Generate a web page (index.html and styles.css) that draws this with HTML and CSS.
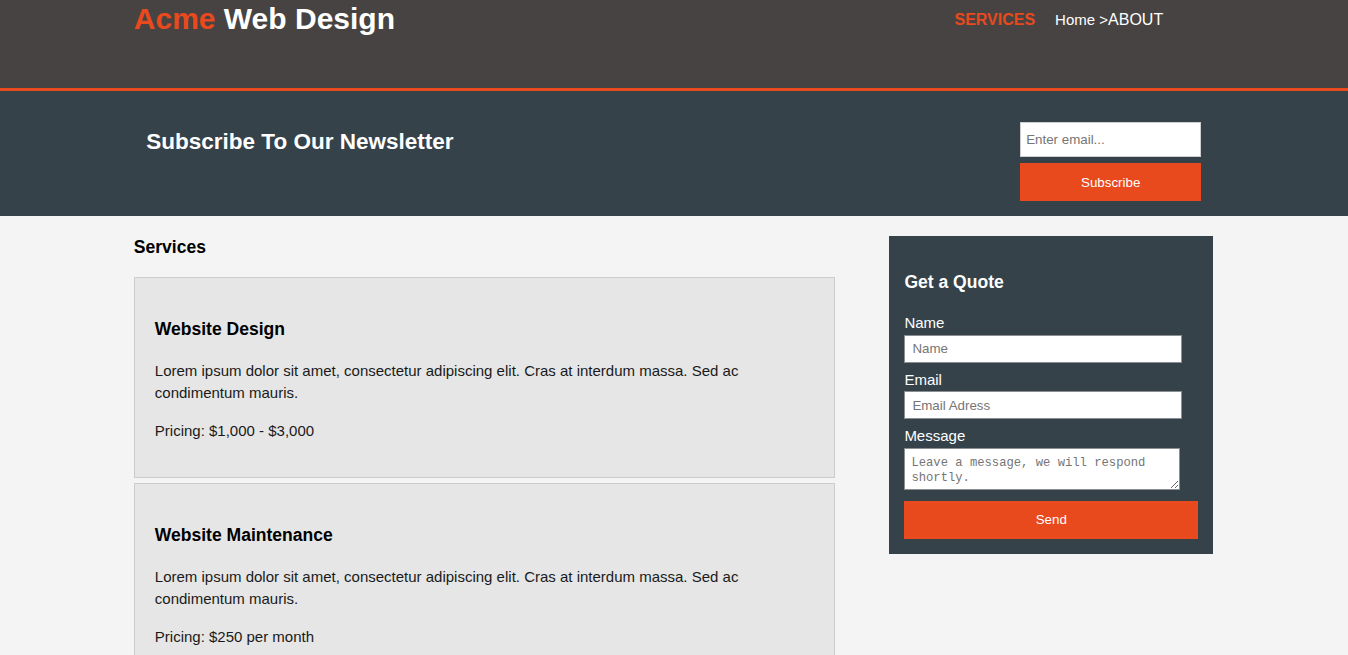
FILE: index.html
```html
<!DOCTYPE html>
<html lang="en">
<head>
<meta charset="utf-8">
<title>Acme Web Design | Services</title>
<link rel="stylesheet" href="styles.css">
</head>
<body>
<header class="site-header">
  <div class="container header-inner">
    <div class="branding">
      <h1><span class="highlight">Acme</span> Web Design</h1>
    </div>
    <nav class="main-nav">
      <a class="nav-link current" href="#">Services</a>
      <span class="nav-crumb">Home &gt;</span><a class="nav-link" href="#">About</a>
    </nav>
  </div>
</header>

<section class="newsletter">
  <div class="news-inner">
    <h2 class="news-title">Subscribe To Our Newsletter</h2>
    <form class="news-form">
      <input class="news-input" type="email" placeholder="Enter email...">
      <button class="btn news-btn" type="button">Subscribe</button>
    </form>
  </div>
</section>

<section class="main">
  <div class="container main-inner">
    <article class="services">
      <h3 class="page-title">Services</h3>
      <div class="service-card">
        <h3>Website Design</h3>
        <p>Lorem ipsum dolor sit amet, consectetur adipiscing elit. Cras at interdum massa. Sed ac condimentum mauris.</p>
        <p>Pricing: $1,000 - $3,000</p>
      </div>
      <div class="service-card">
        <h3>Website Maintenance</h3>
        <p>Lorem ipsum dolor sit amet, consectetur adipiscing elit. Cras at interdum massa. Sed ac condimentum mauris.</p>
        <p>Pricing: $250 per month</p>
      </div>
      <div class="service-card">
        <h3>Website Hosting</h3>
        <p>Lorem ipsum dolor sit amet, consectetur adipiscing elit. Cras at interdum massa. Sed ac condimentum mauris.</p>
        <p>Pricing: $25 per month</p>
      </div>
    </article>

    <aside class="sidebar">
      <h3 class="side-title">Get a Quote</h3>
      <form class="quote">
        <div class="field">
          <label class="field-label">Name</label>
          <input class="field-input" type="text" placeholder="Name">
        </div>
        <div class="field">
          <label class="field-label">Email</label>
          <input class="field-input" type="email" placeholder="Email Adress">
        </div>
        <div class="field">
          <label class="field-label">Message</label>
          <textarea class="field-text" placeholder="Leave a message, we will respond shortly."></textarea>
        </div>
        <button class="btn send-btn" type="button">Send</button>
      </form>
    </aside>
  </div>
</section>
</body>
</html>
```

FILE: styles.css
```css
body {
  margin: 0;
  padding: 0;
  font: 15px/1.5 "Liberation Sans", Arial, Helvetica, sans-serif;
  background-color: #f4f4f4;
  color: #111;
}

.container {
  width: calc(80% + 1px);
  margin-left: calc(10% - 1px);
  margin-right: auto;
}

/* Header */
.site-header {
  background: #474342;
  color: #fff;
  height: 88px;
  border-bottom: 3px solid #e8491d;
}

.header-inner {
  display: flex;
  justify-content: space-between;
  align-items: flex-start;
}

.branding h1 {
  margin: 0;
  padding-top: 2px;
  font-size: 30px;
  line-height: 34.5px;
  font-weight: bold;
  color: #fff;
}

.highlight {
  color: #e8491d;
}

.main-nav {
  margin-top: 8px;
  margin-right: 50px;
  display: flex;
  align-items: baseline;
  line-height: 24px;
}

.nav-link {
  color: #fff;
  text-decoration: none;
  text-transform: uppercase;
  font-size: 16px;
}

.nav-link.current {
  color: #e8491d;
  font-weight: bold;
  margin-right: 20px;
}

.nav-crumb {
  font-size: 15px;
  color: #fff;
  white-space: pre;
}

/* Newsletter */
.newsletter {
  background: #35424a;
  color: #fff;
  padding: 15px;
}

.news-inner {
  width: 80%;
  margin: 0 auto;
  display: flex;
  justify-content: space-between;
  align-items: flex-start;
}

.news-title {
  margin: 18.5px 0 0 -0.5px;
  font-size: 22.5px;
  line-height: 33.75px;
}

.news-form {
  margin-top: 16px;
  display: flex;
  flex-direction: column;
  width: 181px;
}

.news-input {
  box-sizing: border-box;
  width: 181px;
  height: 35px;
  padding: 4px 5px;
  border: 1px solid #cfcfcf;
  font: 13.33px "Liberation Sans", Arial, sans-serif;
  color: #333;
  background: #fff;
  margin: 0 0 6px 0;
}

.news-input::placeholder,
.field-input::placeholder,
.field-text::placeholder {
  color: #757575;
}

.btn {
  height: 38px;
  background: #e8491d;
  border: 0;
  color: #fff;
  font: 13.33px "Liberation Sans", Arial, sans-serif;
  padding: 0 20px;
}

.news-btn {
  width: 181px;
}

/* Main */
.main-inner {
  display: flex;
  justify-content: space-between;
  align-items: flex-start;
}

.services {
  width: 65%;
}

.page-title {
  font-size: 17.55px;
  margin: 17.55px 0;
  color: #000;
}

.service-card {
  background: #e6e6e6;
  border: 1px solid #ccc;
  padding: 20px;
  margin-bottom: 5px;
}

.service-card h3 {
  font-size: 17.55px;
  margin: 17.55px 0;
  color: #000;
}

.service-card p {
  margin: 15px 0;
  color: #1a1a1a;
}

/* Sidebar */
.sidebar {
  box-sizing: border-box;
  width: 30%;
  margin-top: 20px;
  background: #35424a;
  color: #fff;
  padding: 15px;
}

.side-title {
  font-size: 17.55px;
  margin: 17.55px 0;
}

.field {
  margin-bottom: 6px;
}

.field-label {
  display: block;
  line-height: 22.5px;
}

.field-input {
  display: block;
  width: calc(90% + 13px);
  height: 28px;
  box-sizing: border-box;
  padding: 5px 7px;
  border: 1px solid #8a8f93;
  font: 13.33px "Liberation Sans", Arial, sans-serif;
  margin: 0;
  background: #fff;
}

.field-text {
  display: block;
  box-sizing: border-box;
  width: calc(90% + 11px);
  height: 42px;
  padding: 7px 6px 3px;
  border: 1px solid #8a8f93;
  font: 12.2px/15px "Liberation Mono", "DejaVu Sans Mono", monospace;
  margin: 0;
  background: #fff;
}

.send-btn {
  display: block;
  width: 100%;
  margin-top: 11px;
}
```
